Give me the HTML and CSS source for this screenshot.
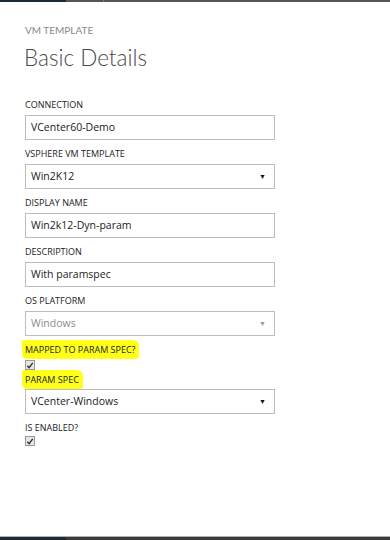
FILE: index.html
```html
<!DOCTYPE html>
<html lang="en">
<head>
    <meta charset="UTF-8">
    <meta name="viewport" content="width=device-width, initial-scale=1.0">
    <title>VM Template</title>
    <link rel="stylesheet" href="styles.css">
</head>
<body>

    <div class="bar top">
        <div class="bar-dark"></div>
        <div class="bar-grey short"></div>
        <div class="bar-grey"></div>
    </div>

    <main class="page">

        <p class="kicker">VM TEMPLATE</p>
        <h1>Basic Details</h1>

        <form class="form">

            <div class="field">
                <label>CONNECTION</label>
                <div class="box">VCenter60-Demo</div>
            </div>

            <div class="field">
                <label>VSPHERE VM TEMPLATE</label>
                <div class="box select">Win2K12 <span class="arrow">&#9660;</span></div>
            </div>

            <div class="field">
                <label>DISPLAY NAME</label>
                <div class="box">Win2k12-Dyn-param</div>
            </div>

            <div class="field">
                <label>DESCRIPTION</label>
                <div class="box">With paramspec</div>
            </div>

            <div class="field">
                <label>OS PLATFORM</label>
                <div class="box select disabled">Windows <span class="arrow">&#9660;</span></div>
            </div>

            <div class="field check-field">
                <label class="marker wide">MAPPED TO PARAM SPEC?</label>
                <span class="check">
                    <svg width="9" height="9" viewBox="0 0 9 9"><path d="M1.5 4.8 L3.5 7 L7.6 1.6" fill="none" stroke="#333" stroke-width="1.6"/></svg>
                </span>
            </div>

            <div class="field">
                <label class="marker">PARAM SPEC</label>
                <div class="box select">VCenter-Windows <span class="arrow">&#9660;</span></div>
            </div>

            <div class="field check-field">
                <label>IS ENABLED?</label>
                <span class="check">
                    <svg width="9" height="9" viewBox="0 0 9 9"><path d="M1.5 4.8 L3.5 7 L7.6 1.6" fill="none" stroke="#333" stroke-width="1.6"/></svg>
                </span>
            </div>

        </form>
    </main>

    <div class="bar bottom">
        <div class="bar-dark"></div>
        <div class="bar-grey"></div>
    </div>

</body>
</html>
```

FILE: styles.css
```css
html, body {
    margin: 0;
    padding: 0;
}

body {
    width: 390px;
    height: 540px;
    display: flex;
    flex-direction: column;
    background-color: #fff;
    font-family: "Open Sans", "Noto Sans", sans-serif;
    color: #333;
}

.bar {
    display: flex;
    height: 2px;
}

.bar-dark {
    width: 66px;
    background-color: #1b2a33;
}

.bar-grey {
    flex: 1;
    background-color: #555;
}

.bar-grey.short {
    flex: none;
    width: 37px;
    border-right: 1px solid #777;
}

.bottom {
    height: 3px;
    border-top: 1px solid #b0b0b0;
}

.bottom .bar-grey {
    background-color: #3b3b3b;
}

.page {
    flex: 1;
    padding: 21px 0 0 25px;
}

.kicker {
    margin: 0;
    font-family: Lato, "Open Sans", sans-serif;
    font-size: 10px;
    line-height: 14px;
    color: #8a8a8a;
}

h1 {
    margin: 5px 0 0 -1px;
    font-family: Lato, "Open Sans", sans-serif;
    font-size: 22.5px;
    line-height: 32px;
    font-weight: 300;
    color: #4a4a4a;
}

.form {
    margin-top: 24px;
    width: 250px;
    display: flex;
    flex-direction: column;
}

.field {
    display: flex;
    flex-direction: column;
    align-items: flex-start;
    margin-bottom: 7px;
}

label {
    font-size: 9px;
    line-height: 14px;
    margin-bottom: 3px;
    color: #222;
}

.box {
    box-sizing: border-box;
    width: 250px;
    height: 25px;
    border: 1px solid #bdbdbd;
    padding: 0 5px;
    font-size: 10.5px;
    line-height: 23px;
    color: #222;
    display: flex;
    justify-content: space-between;
}

.arrow {
    font-size: 7px;
    color: #111;
    margin-right: 3px;
}

.disabled {
    color: #8c8c8c;
}

.disabled .arrow {
    color: #999;
}

.marker {
    background-color: #ffff1a;
    padding: 3px 4px 2px 3px;
    margin: -3px 0 0 -3px;
    border-radius: 2px 6px 3px 5px;
}

.marker.wide {
    padding-right: 4px;
}

.check-field {
    margin-bottom: 3px;
}

.check-field label {
    margin-bottom: 0;
}

.check {
    box-sizing: border-box;
    width: 10px;
    height: 10px;
    margin-top: 1px;
    border: 1px solid #9a9a9a;
    background-color: #e6e6e6;
    display: flex;
    align-items: center;
    justify-content: center;
}
```
